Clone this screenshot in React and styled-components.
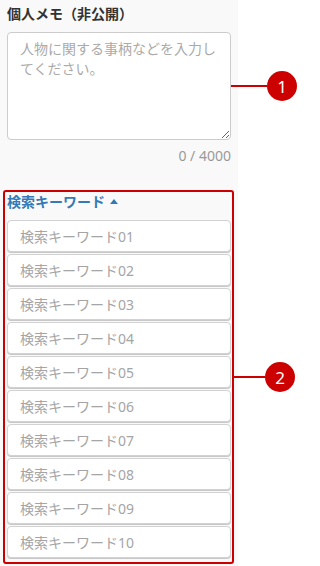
import React from 'react';
import styled, { createGlobalStyle } from 'styled-components';

const GlobalStyle = createGlobalStyle`
  html, body {
    margin: 0;
    padding: 0;
    background: #fff;
  }
  body {
    font-family: "Noto Sans", "Noto Sans CJK JP", sans-serif;
    color: #333;
  }
`;

const StyledPage = styled.div`
  width: 298px;
  height: 566px;
  overflow: hidden;
`;

const StyledPanel = styled.div`
  width: 238px;
  height: 566px;
  box-sizing: border-box;
  padding: 5px 7px 0 7px;
  background: #f9f9f9;
`;

const StyledLabel = styled.div`
  font-size: 14px;
  line-height: 18px;
  font-weight: 700;
  color: #333;
`;

const StyledAnchor = styled.div`
  position: relative;
`;

const StyledTextarea = styled.textarea`
  display: block;
  box-sizing: border-box;
  width: 224px;
  height: 108px;
  margin: 9px 0 0 0;
  padding: 6px 12px;
  border: 1px solid #ccc;
  border-radius: 4px;
  background: #fff;
  font-family: inherit;
  font-size: 14px;
  line-height: 20px;
  color: #333;
  outline: none;

  &::placeholder {
    color: #aaa;
  }
`;

const StyledCounter = styled.div`
  width: 224px;
  margin-top: 7px;
  text-align: right;
  font-size: 14px;
  line-height: 18px;
  color: #999;
`;

const StyledKeywordBox = styled.div`
  position: relative;
  margin: 25px -3px 0 -4px;
  padding: 0 1px 2px 2px;
  border: 2px solid #cc0000;
  border-radius: 3px;
`;

const StyledToggle = styled.div`
  display: flex;
  align-items: center;
  gap: 5px;
  height: 18px;
  margin-bottom: 10px;
  font-size: 14px;
  font-weight: 700;
  color: #337ab7;
`;

const StyledCaret = styled.span`
  width: 0;
  height: 0;
  border-left: 4px solid transparent;
  border-right: 4px solid transparent;
  border-bottom: 5px solid #337ab7;
`;

const StyledInput = styled.input`
  display: block;
  box-sizing: border-box;
  width: 224px;
  height: 32px;
  margin: 0 0 2px 0;
  padding: 0 12px;
  border: 1px solid #d2d2d2;
  border-radius: 4px;
  box-shadow: 0 1px 0 #c8c8c8;
  background: #fff;
  font-family: inherit;
  font-size: 14px;
  color: #333;
  outline: none;

  &:last-child {
    margin-bottom: 0;
  }

  &::placeholder {
    color: #a5a5a5;
  }
`;

const StyledCallout = styled.div`
  position: absolute;
  left: 100%;
  top: 50%;
  transform: translateY(-50%);
  display: flex;
  align-items: center;
`;

const StyledLine = styled.span`
  width: ${({ length }) => length}px;
  height: 2px;
  background: #cc0000;
`;

const StyledBadge = styled.span`
  display: flex;
  align-items: center;
  justify-content: center;
  width: 30px;
  height: 30px;
  border-radius: 50%;
  background: #cc0000;
  color: #fff;
  font-size: 17px;
  line-height: 1;
`;

const Callout = ({ number, length }) => (
  <StyledCallout>
    <StyledLine length={length} />
    <StyledBadge>{number}</StyledBadge>
  </StyledCallout>
);

const keywords = Array.from({ length: 10 }, (_, i) => `検索キーワード${String(i + 1).padStart(2, '0')}`);

const App = () => (
  <StyledPage>
    <GlobalStyle />
    <StyledPanel>
      <StyledLabel>個人メモ（非公開）</StyledLabel>
      <StyledAnchor>
        <StyledTextarea placeholder="人物に関する事柄などを入力してください。" />
        <Callout number="1" length={36} />
      </StyledAnchor>
      <StyledCounter>0 / 4000</StyledCounter>

      <StyledKeywordBox>
        <StyledToggle>
          検索キーワード
          <StyledCaret />
        </StyledToggle>
        {keywords.map((k) => (
          <StyledInput key={k} placeholder={k} />
        ))}
        <Callout number="2" length={33} />
      </StyledKeywordBox>
    </StyledPanel>
  </StyledPage>
);

export default App;
